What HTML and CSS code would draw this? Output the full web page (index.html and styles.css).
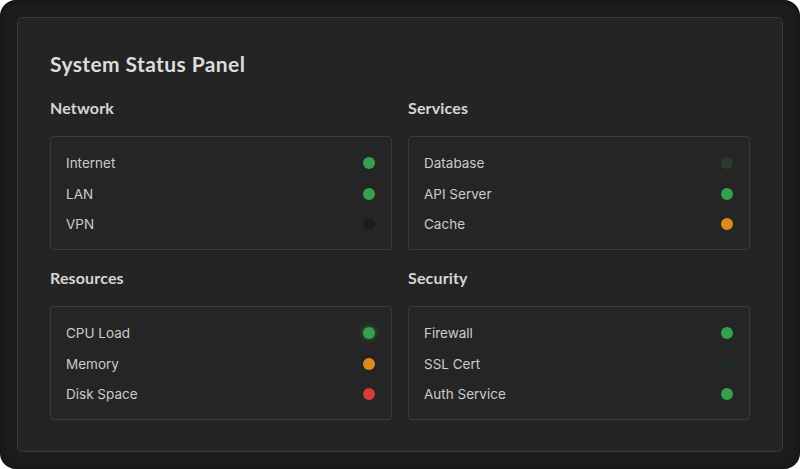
FILE: index.html
```html
<!DOCTYPE html>
<html lang="en">
<head>
<meta charset="utf-8">
<title>System Status Panel</title>
<link rel="stylesheet" href="styles.css">
</head>
<body>
<div class="frame">
  <main class="panel">
    <h1 class="title">System Status Panel</h1>
    <div class="grid">
      <section class="group">
        <h2 class="group-title">Network</h2>
        <ul class="card">
          <li class="row"><span>Internet</span><i class="dot on"></i></li>
          <li class="row"><span>LAN</span><i class="dot on"></i></li>
          <li class="row"><span>VPN</span><i class="dot off"></i></li>
        </ul>
      </section>
      <section class="group">
        <h2 class="group-title">Services</h2>
        <ul class="card">
          <li class="row"><span>Database</span><i class="dot dim"></i></li>
          <li class="row"><span>API Server</span><i class="dot on"></i></li>
          <li class="row"><span>Cache</span><i class="dot warn"></i></li>
        </ul>
      </section>
      <section class="group">
        <h2 class="group-title">Resources</h2>
        <ul class="card">
          <li class="row"><span>CPU Load</span><i class="dot on glow"></i></li>
          <li class="row"><span>Memory</span><i class="dot warn"></i></li>
          <li class="row"><span>Disk Space</span><i class="dot err"></i></li>
        </ul>
      </section>
      <section class="group">
        <h2 class="group-title">Security</h2>
        <ul class="card">
          <li class="row"><span>Firewall</span><i class="dot on"></i></li>
          <li class="row"><span>SSL Cert</span><i class="dot faint"></i></li>
          <li class="row"><span>Auth Service</span><i class="dot on"></i></li>
        </ul>
      </section>
    </div>
  </main>
</div>
</body>
</html>
```
FILE: styles.css
```css
* { box-sizing: border-box; }
html, body { margin: 0; padding: 0; background: #ffffff; }
body { width: 800px; height: 469px; overflow: hidden; }

.frame {
  width: 800px;
  height: 469px;
  border-radius: 16px;
  background: #1c1c1c;
  box-shadow: inset 0 0 6px rgba(0,0,0,0.5);
  padding: 17px;
}

.panel {
  height: 100%;
  border: 1px solid #3a3a3a;
  border-radius: 5px;
  background: #242424;
  padding: 32px;
}

.title {
  margin: 0 0 18px;
  font-family: "Lato", "Inter", sans-serif;
  font-weight: 700;
  font-size: 21px;
  line-height: 28px;
  color: #dcdcdc;
  letter-spacing: 0.4px;
}

.grid {
  display: grid;
  grid-template-columns: 342px 342px;
  column-gap: 16px;
  row-gap: 16px;
}

.group-title {
  margin: 0 0 16px;
  font-family: "Lato", "Inter", sans-serif;
  font-weight: 700;
  font-size: 16px;
  line-height: 24px;
  color: #d6d6d6;
  letter-spacing: 0.15px;
}

.card {
  list-style: none;
  margin: 0;
  border: 1px solid #3b3b3b;
  border-radius: 4px;
  background: #252525;
  padding: 16px 16px 15px 15px;
  display: flex;
  flex-direction: column;
  gap: 10.5px;
}

.row {
  display: flex;
  align-items: center;
  justify-content: space-between;
  height: 20px;
  font-family: "Inter", "Liberation Sans", sans-serif;
  font-size: 13.5px;
  color: #cbcbcb;
}

.dot {
  display: block;
  width: 12px;
  height: 12px;
  border-radius: 50%;
}
.dot.on { background: #35a04f; }
.dot.off { background: #1c1c1c; }
.dot.dim { background: #2a3b2d; }
.dot.faint { background: #1f2b22; }
.dot.warn { background: #db8a1c; }
.dot.err { background: #d63a3a; }
.dot.glow { box-shadow: 0 0 5px 1px rgba(53,160,79,0.45); }
```
